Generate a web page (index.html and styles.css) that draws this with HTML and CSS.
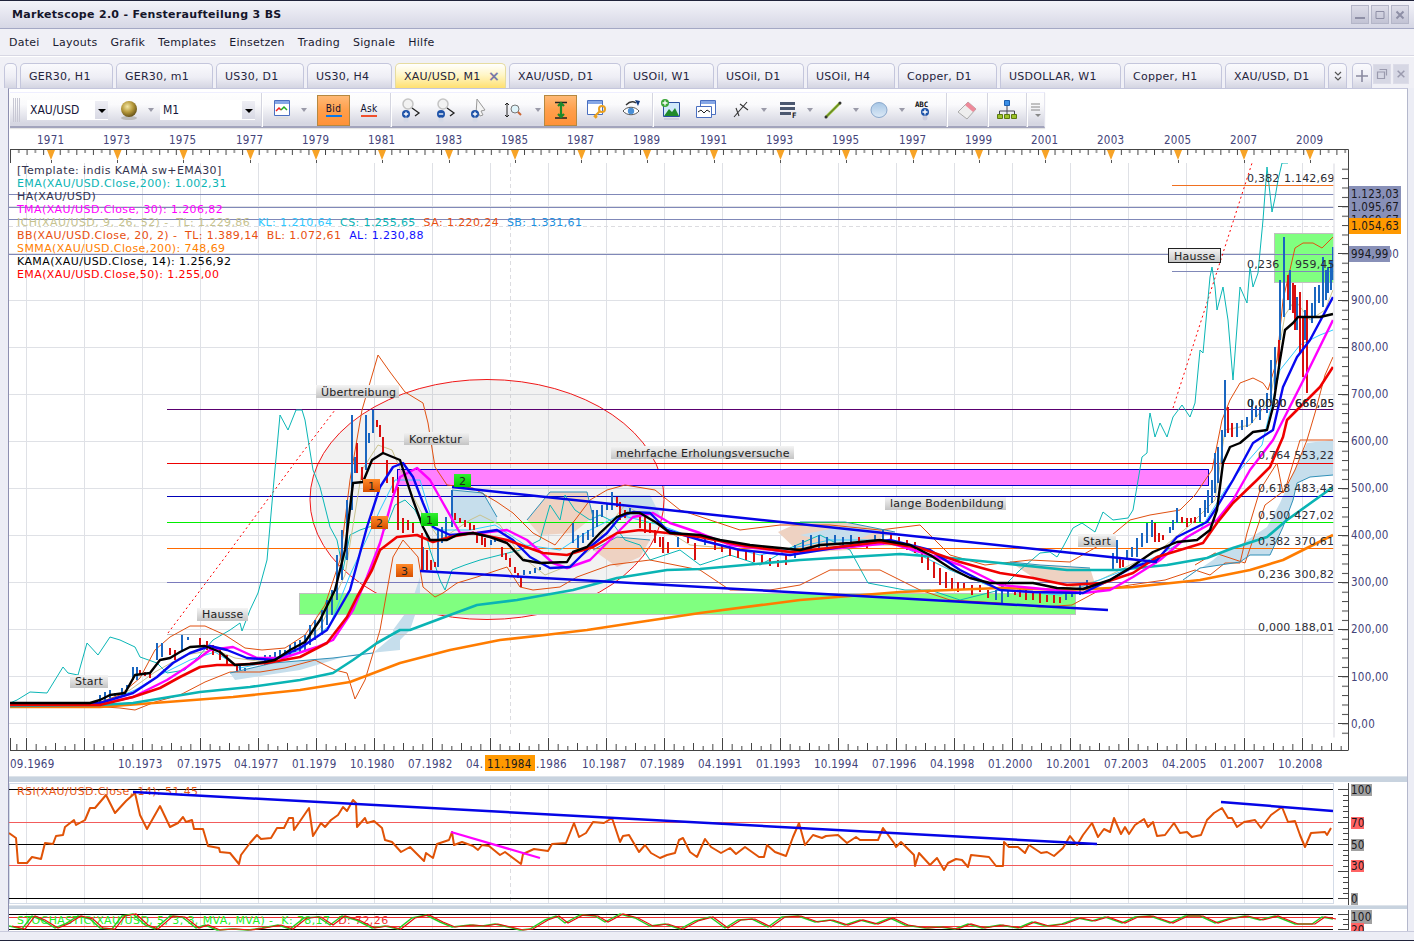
FILE: index.html
```html
<!DOCTYPE html>
<html lang="de">
<head>
<meta charset="utf-8">
<title>Marketscope 2.0 - Fensteraufteilung 3 BS</title>
<link rel="stylesheet" href="styles.css">
</head>
<body>
<div class="window">
  <header class="titlebar">
    <span class="title">Marketscope 2.0 - Fensteraufteilung 3 BS</span>
    <div class="winbtns">
      <span class="winbtn"><svg viewBox="0 0 12 12"><path d="M1 9h10" class="wi2"/></svg></span>
      <span class="winbtn"><svg viewBox="0 0 12 12"><path d="M2 2.500h8v7H2z" class="wi"/></svg></span>
      <span class="winbtn"><svg viewBox="0 0 12 12"><path d="M2.500 2.500l7 7M9.500 2.500l-7 7" class="wi2"/></svg></span>
    </div>
  </header>
  <nav class="menubar">
    <span>Datei</span><span>Layouts</span><span>Grafik</span><span>Templates</span><span>Einsetzen</span><span>Trading</span><span>Signale</span><span>Hilfe</span>
  </nav>
  <div class="tabbar">
    <div class="tab"></div>
    <div class="tab">GER30, H1</div>
    <div class="tab">GER30, m1</div>
    <div class="tab">US30, D1</div>
    <div class="tab">US30, H4</div>
    <div class="tab active">XAU/USD, M1<b class="tabx">×</b></div>
    <div class="tab">XAU/USD, D1</div>
    <div class="tab">USOil, W1</div>
    <div class="tab">USOil, D1</div>
    <div class="tab">USOil, H4</div>
    <div class="tab">Copper, D1</div>
    <div class="tab">USDOLLAR, W1</div>
    <div class="tab">Copper, H1</div>
    <div class="tab">XAU/USD, D1</div>
    <div class="tab chev"><svg viewBox="0 0 10 12" width="10" height="12"><path d="M2 2l3 3 3-3M2 7l3 3 3-3" fill="none" stroke="#555" stroke-width="1.2"/></svg></div>
    <div class="tab plus"><svg viewBox="0 0 12 12" width="12" height="12"><path d="M6 0v12M0 6h12" stroke="#8a8aa0" stroke-width="1.6"/></svg></div>
    <div class="mdibtn"><svg viewBox="0 0 12 12" width="12" height="12"><path d="M3.500 1.500h7v6M1.500 4h7v6.500h-7z" fill="none" stroke="#9a9aae" stroke-width="1.200"/></svg></div>
    <div class="mdibtn"><svg viewBox="0 0 12 12" width="10" height="10"><path d="M2 2l8 8M10 2l-8 8" stroke="#9a9aae" stroke-width="1.800"/></svg></div>
  </div>
  <main class="panel">
    <div class="toolwrap">
      <div class="toolbar">
        <div class="grip"></div>
        <div class="combo c1"><span>XAU/USD</span><i class="drop"></i></div>
        <div class="tool"><svg width="22" height="26" viewBox="0 0 22 26"><defs><radialGradient id="gold" cx=".4" cy=".35" r=".7"><stop offset="0" stop-color="#f3e6a4"/><stop offset=".5" stop-color="#b79a3c"/><stop offset="1" stop-color="#5e4a12"/></radialGradient></defs><ellipse cx="11" cy="21" rx="8" ry="2" fill="#bbb"/><circle cx="11" cy="12" r="8" fill="url(#gold)"/></svg></div>
        <div class="tool"><i class="arr"></i></div>
        <div></div>
        <div class="combo c2"><span>M1</span><i class="drop"></i></div>
        <div class="tool"><i class="sep"></i></div>
        <div class="tool"><svg width="22" height="26" viewBox="0 0 22 26"><path d="M3.500 3.500h15v15h-15z" fill="#fff" stroke="#4a6fc0"/><path d="M4 4h14v3H4z" fill="#86a7e6"/><path d="M5 14l3-3 2 2" fill="none" stroke="#e22" stroke-width="1.500"/><path d="M10 13l3-3 3 3" fill="none" stroke="#2a2" stroke-width="1.500"/><path d="M5 21h12" stroke="#ddd" stroke-width="2"/></svg></div>
        <div class="tool"><i class="arr"></i></div>
        <div></div>
        <div class="tool"><div class="btn on bid"><span>Bid</span><i class="bar blue"></i></div></div>
        <div class="tool"><div class="btn bid"><span>Ask</span><i class="bar red"></i></div></div>
        <div class="tool"><i class="sep"></i></div>
        <div class="tool"><svg width="24" height="26" viewBox="0 0 24 26"><circle cx="10" cy="7" r="5" fill="#f2f2f2" stroke="#c4c4c4" stroke-width="1.500"/><path d="M14 11l7 5-4 3" fill="none" stroke="#222" stroke-width="1.300"/><circle cx="8" cy="17" r="4" fill="#1d52a8"/><path d="M8 14.800v4.400M5.800 17h4.400" stroke="#fff" stroke-width="1.300"/><circle cx="8" cy="23" r="2.500" fill="#d4d8e4"/></svg></div>
        <div class="tool"><svg width="24" height="26" viewBox="0 0 24 26"><circle cx="10" cy="7" r="5" fill="#f2f2f2" stroke="#c4c4c4" stroke-width="1.500"/><path d="M14 11l7 5-4 3" fill="none" stroke="#222" stroke-width="1.300"/><circle cx="8" cy="17" r="4" fill="#1d52a8"/><path d="M5.800 17h4.400" stroke="#fff" stroke-width="1.300"/><circle cx="8" cy="23" r="2.500" fill="#d4d8e4"/></svg></div>
        <div class="tool"><svg width="24" height="26" viewBox="0 0 24 26"><path d="M10 2l8 11-4 1 2 4-3 1-2-4-2 2z" fill="#f4f4f4" stroke="#999"/><circle cx="8" cy="17" r="4" fill="#1d52a8"/><path d="M8 14.800v4.400M5.800 17h4.400" stroke="#fff" stroke-width="1.300"/><circle cx="8" cy="23" r="2.500" fill="#d4d8e4"/></svg></div>
        <div class="tool"><svg width="24" height="26" viewBox="0 0 24 26"><path d="M5 6v14M3 8l2-2 2 2M3 18l2 2 2-2" fill="none" stroke="#222"/><circle cx="13" cy="12" r="4" fill="#dff4fa" stroke="#777"/><path d="M16 15l3 3" stroke="#c63" stroke-width="2"/><path d="M4 22h14" stroke="#ddd"/></svg></div>
        <div class="tool"><i class="arr"></i></div>
        <div class="tool"><div class="btn on"><svg width="22" height="26" viewBox="0 0 22 26"><path d="M5 5.500h12M5 21h12" stroke="#222" stroke-width="1.300"/><path d="M11 6v14M8 9l3-3 3 3M8 17l3 3 3-3" fill="none" stroke="#1c8a2a" stroke-width="2.200"/></svg></div></div>
        <div class="tool"><svg width="24" height="26" viewBox="0 0 24 26"><path d="M3.500 3.500h15v14h-15z" fill="#fff" stroke="#4a6fc0"/><path d="M4 4h14v3H4z" fill="#86a7e6"/><circle cx="18" cy="12" r="3" fill="none" stroke="#e8a020" stroke-width="2"/><path d="M16 14l-6 6M11 21l2-2" stroke="#e8a020" stroke-width="2.200"/></svg></div>
        <div class="tool"><svg width="24" height="26" viewBox="0 0 24 26"><path d="M3 14c4-5 12-5 16 0-4 5-12 5-16 0z" fill="#fff" stroke="#555"/><circle cx="11" cy="14" r="3.200" fill="#4a8fd6"/><path d="M6 8c3-3 7-4 10-2" fill="none" stroke="#333" stroke-width="1.400"/><path d="M15 3l5 1-2 5z" fill="#123a80"/><path d="M6 22h10" stroke="#ddd" stroke-width="2"/></svg></div>
        <div class="tool"><i class="sep"></i></div>
        <div class="tool"><svg width="24" height="26" viewBox="0 0 24 26"><path d="M4.500 5.500h16v14h-16z" fill="#cfe8fa" stroke="#2a4fa0"/><path d="M5 19l5-7 3 3 3-4 4 8z" fill="#1f8a2a"/><circle cx="6" cy="6" r="4" fill="#3aa63a"/><path d="M6 3.500v5M3.500 6h5" stroke="#fff" stroke-width="1.300"/><path d="M5 22h15" stroke="#ccd" stroke-width="2"/></svg></div>
        <div class="tool"><svg width="24" height="26" viewBox="0 0 24 26"><path d="M6.500 3.500h15v14h-15z" fill="#fff" stroke="#4a6fc0"/><path d="M7 4h14v3H7z" fill="#86a7e6"/><path d="M2.500 9.500h15v11h-15z" fill="#fff" stroke="#4a6fc0"/><path d="M4 15l3-2 3 3 3-3 3 2" fill="none" stroke="#222"/></svg></div>
        <div class="tool"><svg width="24" height="26" viewBox="0 0 24 26"><path d="M5 20L18 5M7 11l3 8M11 7l8 6" fill="none" stroke="#333" stroke-width="1.100"/><path d="M6 23l3-1" stroke="#ddd" stroke-width="2"/></svg></div>
        <div class="tool"><i class="arr"></i></div>
        <div class="tool"><svg width="24" height="26" viewBox="0 0 24 26"><path d="M4 5h15v3H4zM4 10h15v3H4zM4 15h11v3H4z" fill="#4c5870"/><text x="16" y="21" class="icon-t">F</text></svg></div>
        <div class="tool"><i class="arr"></i></div>
        <div class="tool"><svg width="24" height="26" viewBox="0 0 24 26"><path d="M5 20L19 6" stroke="#84b020" stroke-width="2.500"/><path d="M5 20L19 6" stroke="#445" stroke-width=".5"/><circle cx="19" cy="6" r="1.500" fill="#333"/><circle cx="5" cy="20" r="1.500" fill="#333"/></svg></div>
        <div class="tool"><i class="arr"></i></div>
        <div class="tool"><svg width="24" height="26" viewBox="0 0 24 26"><defs><linearGradient id="oval" x1="0" y1="0" x2="0" y2="1"><stop offset="0" stop-color="#a7c7e6"/><stop offset="1" stop-color="#dce9f6"/></linearGradient></defs><ellipse cx="12" cy="13" rx="8" ry="7.500" fill="url(#oval)" stroke="#8aa8cc"/></svg></div>
        <div class="tool"><i class="arr"></i></div>
        <div class="tool"><svg width="24" height="26" viewBox="0 0 24 26"><text x="2" y="10" class="icon-t">ABC</text><circle cx="12" cy="15" r="4" fill="#1d52a8"/><path d="M12 12.500v5M9.500 15h5" stroke="#fff" stroke-width="1.400"/><circle cx="12" cy="21" r="2.500" fill="#ccd"/></svg></div>
        <div class="tool"><i class="sep"></i></div>
        <div class="tool"><svg width="24" height="26" viewBox="0 0 24 26"><path d="M3 15L13 5l8 7-9 10z" fill="#eee" stroke="#aaa"/><path d="M10 8l3-3 8 7-3 3z" fill="#ee8a9a"/></svg></div>
        <div class="tool"><i class="sep"></i></div>
        <div class="tool"><svg width="24" height="26" viewBox="0 0 24 26"><path d="M9.500 3.500h5v5h-5z" fill="#3a8ee6" stroke="#1c5fb0"/><path d="M12 9v5M4.500 17v-3h15v3M12 14v3" fill="none" stroke="#445"/><path d="M2.500 17.500h5v4h-5zM9.500 17.500h5v4h-5zM16.500 17.500h5v4h-5z" fill="#9bc22a" stroke="#5c7a10"/></svg></div>
        <div class="tool"><i class="sep"></i></div>
        <div class="tool"><svg width="12" height="16" viewBox="0 0 12 16"><path d="M1 2h9M1 5h9M1 8h9" stroke="#888"/><path d="M5 12h6l-3 3z" fill="#888"/></svg></div>
      </div>
    </div>

    <div class="charts">
      <svg class="chart" width="1398" height="32" viewBox="9 131 1398 32">
        <defs>
          <pattern id="tt" width="16.580" height="32" patternUnits="userSpaceOnUse" x="10" y="131"><path d="M.5 19v5M8.800 19v3" stroke="#444" stroke-width="1"/></pattern>
        </defs>
        <g class="ax">
          <text x="37" y="144">1971</text><text x="103" y="144">1973</text><text x="169" y="144">1975</text><text x="236" y="144">1977</text><text x="302" y="144">1979</text><text x="368" y="144">1981</text><text x="435" y="144">1983</text><text x="501" y="144">1985</text><text x="567" y="144">1987</text><text x="633" y="144">1989</text><text x="700" y="144">1991</text><text x="766" y="144">1993</text><text x="832" y="144">1995</text><text x="899" y="144">1997</text><text x="965" y="144">1999</text><text x="1031" y="144">2001</text><text x="1097" y="144">2003</text><text x="1164" y="144">2005</text><text x="1230" y="144">2007</text><text x="1296" y="144">2009</text>
        </g>
        <rect x="10" y="150" width="1338" height="6" fill="url(#tt)"/>
        <path d="M10 149.500H1348.500V163M10.500 149.500V163" fill="none" stroke="#444"/>
        <path fill="#f7a326" d="M47 150h8l-4 10zM113.500 150h8l-4 10zM179.500 150h8l-4 10zM246.500 150h8l-4 10zM312 150h8l-4 10zM378 150h8l-4 10zM445 150h8l-4 10zM511 150h8l-4 10zM577.500 150h8l-4 10zM643 150h8l-4 10zM710 150h8l-4 10zM776.500 150h8l-4 10zM842 150h8l-4 10zM909.500 150h8l-4 10zM975 150h8l-4 10zM1041.500 150h8l-4 10zM1107 150h8l-4 10zM1174 150h8l-4 10zM1240 150h8l-4 10zM1306 150h8l-4 10z"/>
        <path d="M51.500 160v3M117.500 160v3M183.500 160v3M250.500 160v3M316.500 160v3M382.500 160v3M449.500 160v3M515.500 160v3M581.500 160v3M647.500 160v3M714.500 160v3M780.500 160v3M846.500 160v3M913.500 160v3M979.500 160v3M1045.500 160v3M1111.500 160v3M1178.500 160v3M1244.500 160v3M1310.500 160v3" stroke="#555"/>
      </svg>

      <div class="mainchart">
        <svg class="chart" width="1398" height="588" viewBox="9 163 1398 588">
          <defs>
            <clipPath id="plot"><rect x="9" y="163" width="1324.500" height="574"/></clipPath>
            <linearGradient id="lab" x1="0" y1="0" x2="0" y2="1"><stop offset="0" stop-color="#f4f4f4"/><stop offset="1" stop-color="#c4c4c4"/></linearGradient>
            <linearGradient id="ora" x1="0" y1="0" x2="0" y2="1"><stop offset="0" stop-color="#ff8a2a"/><stop offset="1" stop-color="#d85000"/></linearGradient>
            <linearGradient id="grn" x1="0" y1="0" x2="0" y2="1"><stop offset="0" stop-color="#30f030"/><stop offset="1" stop-color="#00c800"/></linearGradient>
            <pattern id="bt" width="58" height="13" patternUnits="userSpaceOnUse" x="26" y="738"><path d="M.5 0v13M10.170 6v7M19.830 8v5M29.500 5v8M39.170 8v5M48.830 6v7" stroke="#444"/></pattern>
            <pattern id="rt" width="6" height="9.400" patternUnits="userSpaceOnUse" x="1342" y="187.500"><path d="M0 .5h6" stroke="#444"/></pattern>
          </defs>

          <g clip-path="url(#plot)">
            <path class="grid" d="M26.500 163v574M84.500 163v574M142.500 163v574M200.500 163v574M258.500 163v574M316.500 163v574M374.500 163v574M432.500 163v574M490.500 163v574M548.500 163v574M606.500 163v574M664.500 163v574M722.500 163v574M780.500 163v574M838.500 163v574M896.500 163v574M954.500 163v574M1012.500 163v574M1070.500 163v574M1128.500 163v574M1186.500 163v574M1244.500 163v574M1302.500 163v574M9 723.500h1325M9 676.500h1325M9 629.500h1325M9 582.500h1325M9 535.500h1325M9 488.500h1325M9 441.500h1325M9 394.500h1325M9 347.500h1325M9 300.500h1325M9 253.500h1325M9 206.500h1325"/>
            <path d="M9 226.500h1325M510.500 163v574" class="cross"/>

            <ellipse cx="487" cy="499.500" rx="177" ry="120" fill="#a8a8a8" fill-opacity=".15" stroke="#f01818"/>

            <path class="cloud-b" d="M230 673L273 663 333 658 373 653 400 630 400 650 350 655 300 670 235 680z"/>
            <path class="cloud-b" d="M393 630L410 607 420 577 420 600 410 630 395 645z"/>
            <path class="cloud-b" d="M452 490L467 492 483 493 497 517 497 523 453 523z"/>
            <path class="cloud-s" d="M527 520L550 492 587 492 593 517 573 533 540 535z"/>
            <path class="cloud-s" d="M593 550L617 537 650 540 640 557 617 567z"/>
            <path class="cloud-b" d="M612 495H650L660 515 625 520z"/>
            <path class="cloud-s" d="M778 532L800 522 845 522 895 532 850 550 800 553z"/>
            <path class="cloud-b" d="M800 535L850 525 880 530 845 545z"/>
            <path class="cloud-s" d="M1010 562L1040 565 1090 568 1097 590 1040 582z"/>
            <path class="cloud-b" d="M1183 580L1213 560 1227 548 1240 545 1267 527 1280 503 1293 473 1307 443 1333 440 1333 475 1310 477 1297 483 1293 500 1283 527 1270 555 1250 555 1240 562 1200 568z"/>

            <rect class="grect" x="299.500" y="593.500" width="776" height="21"/>
            <rect class="grect" x="1274.500" y="233.500" width="60" height="49"/>
            <rect x="397.500" y="469.500" width="811" height="16" fill="#ff80ff" stroke="#0000c8"/>

            <path d="M167 634.500H1334" stroke="#b8b8b8"/>
            <path d="M167 582.500H1334" stroke="#7a7abc"/>
            <path d="M167 548.500H1334" stroke="#ff6a00"/>
            <path d="M167 522.500H1334" stroke="#00ee00"/>
            <path d="M167 496.500H1334" stroke="#0000b8"/>
            <path d="M167 463.500H1334" stroke="#ee0000"/>
            <path d="M167 409.500H1334" stroke="#5a0070"/>
            <path d="M1172 271.500H1334" stroke="#8088b8"/>
            <path d="M1172 185.500H1334" stroke="#f07020"/>
            <path d="M9 194.500H1334M9 207.500H1334M9 219.500H1334M9 254.500H1334" stroke="#8088b8"/>

            <path class="dash" d="M168 633L223 560 302 453 335 410"/>
            <path class="dash" d="M1173 408L1253 160"/>

            <polyline class="t chik" points="10,703 17,700 30,692 47,693 63,667 68,673 78,675 87,643 98,655 110,637 120,640 135,647 140,657 157,663 167,673 185,670 200,655 213,640 230,630 240,623 242,631 250,610 258,593 267,560 274,480 280,415 288,430 296,410 302,410 305,420 313,470 320,487 330,527 337,540 343,570 350,535 360,530 375,525 385,530 395,505 405,500 415,510 425,530 430,550 440,580 445,590 452,570 465,565 480,560 500,555 520,550 540,540 550,505 560,520 565,495 575,510 590,520 600,515 610,520 625,540 640,545 650,560 680,550 700,565 730,555 760,565 790,548 820,535 850,550 868,583 905,590 930,590 960,600 1000,590 1020,570 1040,553 1050,552 1057,557 1063,547 1073,528 1082,523 1095,532 1103,512 1113,520 1128,518 1133,510 1142,457 1147,453 1149,420 1150,413 1155,437 1160,423 1167,437 1173,417 1182,405 1190,417 1195,403 1200,350 1203,353 1210,277 1212,267 1215,287 1217,310 1223,287 1228,320 1233,380 1240,287 1247,303 1250,267 1253,287 1258,273 1263,220 1267,167 1272,212 1275,198 1278,180 1282,163 1288,163"/>
            <polyline class="t tan" points="100,703 130,690 155,672 185,655 215,650 235,658 265,662 290,652 320,628 345,575 362,470 378,445 392,450 405,480 420,510 440,540 470,520 480,515 500,525 520,555 545,575 570,565 590,550 605,530 625,505 650,520 690,545 750,550 800,550 850,545 900,545 950,570 1000,590 1050,592 1100,580 1130,565 1160,550 1190,525 1215,500 1225,430 1250,425 1270,400 1285,315 1295,300 1310,320 1325,310 1333,290"/>
            <polyline class="t lc" points="100,704 135,690 160,675 190,660 215,652 240,668 270,662 300,650 330,625 350,575 380,510 395,480 420,480 435,530 470,530 495,525 525,545 560,550 590,530 620,515 660,525 700,540 760,555 830,540 890,540 950,570 1000,590 1060,595 1120,572 1160,555 1200,530 1225,490 1240,470 1262,445 1280,370 1300,345 1320,335 1333,330"/>
            <polyline class="t bb" points="10,704 95,704 120,695 140,678 155,650 170,637 190,626 205,626 225,635 245,648 262,650 285,648 305,635 325,605 340,560 350,480 362,410 378,355 390,372 405,392 423,403 428,423 435,467 447,485 473,488 497,502 513,513 533,533 555,545 575,520 590,500 607,490 625,485 655,490 680,510 710,520 740,530 780,525 830,525 880,530 920,525 950,555 985,565 1030,560 1070,562 1100,545 1130,520 1150,515 1180,510 1195,495 1212,470 1222,420 1230,400 1240,383 1253,378 1263,383 1268,390 1277,360 1283,300 1295,248 1303,243 1313,243 1322,248 1333,237"/>
            <polyline class="t bb" points="10,706 90,706 120,708 135,710 155,702 180,695 205,682 230,672 260,672 285,668 315,660 335,670 347,673 355,699 365,680 380,630 393,557 403,540 418,557 423,587 435,597 443,593 457,583 477,577 507,567 520,587 533,590 560,587 577,577 610,565 650,560 700,570 730,590 770,590 800,585 830,570 880,570 920,590 950,600 1000,603 1040,607 1072,605 1100,590 1130,585 1165,580 1195,570 1210,575 1225,563 1240,563 1247,533 1260,490 1277,463 1283,493 1295,470 1307,440 1315,413 1325,375 1333,357"/>
            <polyline class="t bb" points="1195,565 1215,553 1245,563 1265,505 1285,490 1300,440 1320,440 1333,440"/>

            <path class="cb" d="M100 695V704M105 692V700M110 690V698M115 693V696M122 688V695M127 685V690M133 667V680M137 667V680M157 643V660M162 643V657M182 635V650M188 637V640M240 665V670M245 668V671M265 655V665M270 655V662M275 652V660M280 650V658M285 650V655M290 645V655M295 642V652M300 640V652M305 635V650M310 625V645M315 620V640M322 610V635M327 600V625M332 590V615M337 555V600M342 530V580M347 500V560M352 415V510M355 457V473M366 415V470M369 433V443M373 410V433M423 547V570M438 530V567M442 527V543M446 517V537M452 490V527M491 540V545M495 538V542M524 570V575M530 571V574M535 568V573M540 567V570M573 523V543M578 535V548M583 533V543M588 530V540M593 510V537M597 510V527M602 505V517M607 503V510M612 492V510M630 508V514M678 537V547M705 535V545M795 545V558M803 540V552M811 535V550M819 535V548M827 537V547M835 535V545M843 537V547M851 535V545M875 535V545M883 530V545M996 590V600M1002 585V603M1008 590V597M1066 590V600M1072 588V597M1080 585V595M1087 580V590M1113 553V570M1117 540V563M1127 550V560M1132 547V557M1137 538V557M1142 533V547M1147 523V543M1152 520V537M1170 527V533M1173 520V530M1177 508V523M1200 508V522M1205 500V517M1208 490V513M1212 480V503M1215 453V493M1218 447V483M1222 430V463M1225 380V437M1237 423V437M1242 420V430M1247 417V427M1252 400V423M1256 407V417M1260 407V420M1267 393V413M1271 360V403M1275 347V390M1280 280V340M1284 237V317M1290 270V310M1297 297V330M1305 310V340M1312 303V323M1315 287V317M1319 285V303M1323 257V307M1326 270V300M1328 267V293M1331 260V290M1333 247V280"/>
            <path class="cr" d="M140 670V675M145 672V676M150 672V678M170 648V655M175 650V660M200 638V645M207 641V650M213 645V655M220 650V660M227 655V665M237 665V672M357 443V473M362 467V480M377 420V427M380 425V437M383 437V453M387 460V483M393 477V493M398 487V530M403 518V533M408 520V530M413 523V533M422 533V570M427 550V570M431 560V570M435 562V567M455 513V520M460 518V523M465 520V527M470 523V530M474 525V530M477 533V543M482 535V545M485 538V547M502 547V557M506 553V560M510 558V567M515 567V573M518 573V578M521 577V587M617 497V507M620 502V520M625 510V518M640 513V528M645 517V533M650 523V533M655 530V543M660 537V547M663 537V553M668 542V553M688 533V543M695 543V560M715 540V550M722 545V552M730 548V556M738 550V558M746 550V560M754 552V562M762 555V563M770 558V566M778 560V567M786 555V565M859 537V547M867 540V548M891 535V543M899 537V545M907 540V550M915 542V553M922 550V563M928 555V570M934 562V578M940 568V585M946 572V588M952 578V590M958 582V592M964 583V590M972 585V595M980 585V592M988 590V598M1015 590V595M1020 588V597M1026 590V600M1033 592V600M1040 593V603M1047 595V602M1054 595V603M1060 597V603M1120 558V568M1123 560V567M1155 523V542M1159 533V542M1163 535V540M1182 517V523M1187 518V527M1191 518V523M1195 517V523M1228 407V433M1232 423V437M1279 340V367M1288 275V300M1293 283V313M1295 285V330M1300 292V353M1303 317V377M1307 300V393"/>

            <path class="cloud-line" d="M230 673L273 663 333 658 373 653M452 490L483 493 497 517M527 520L550 492 587 492 593 517M593 550L617 537 650 540M1183 580L1200 568 1240 562 1250 555 1270 555 1283 527 1293 500 1297 483 1310 477 1333 475M800 522H845L895 532M1010 562L1040 565 1090 568"/>

            <polyline class="m orange" points="10,707 100,707 167,702 233,697 300,690 350,682 400,663 450,650 500,640 545,635 587,630 633,623 700,613 800,600 900,592 1000,588 1067,590 1133,587 1200,580 1250,570 1283,560 1333,535"/>
            <polyline class="m teal" points="10,706 100,705 133,703 200,692 250,687 300,680 333,673 353,660 377,643 400,630 410,630 450,615 477,605 517,600 573,590 617,578 667,570 700,569 800,560 900,554 950,558 1000,563 1067,570 1117,570 1167,565 1207,558 1233,548 1267,537 1287,520 1333,487"/>
            <polyline class="m mag" points="10,704 100,704 133,697 167,680 187,667 210,650 233,647 257,658 283,658 317,647 333,640 353,610 367,577 380,543 393,497 400,477 417,468 430,480 443,503 460,533 480,533 507,530 527,540 553,563 567,568 590,560 607,543 633,517 653,513 670,523 700,533 730,545 790,552 840,548 890,543 930,555 960,565 1000,585 1033,588 1083,593 1110,590 1133,577 1160,560 1187,537 1217,520 1233,500 1250,470 1273,440 1307,373 1333,320"/>
            <polyline class="m blu" points="10,704 100,703 133,693 157,677 173,663 190,653 210,646 227,650 247,658 273,660 300,648 327,630 350,590 367,527 380,487 393,467 403,463 413,477 423,503 433,527 450,535 477,533 497,530 513,540 530,557 550,568 570,567 590,547 607,533 620,517 633,512 650,513 667,530 700,540 740,550 790,555 840,547 890,540 930,550 960,570 1000,590 1033,592 1083,593 1110,580 1133,567 1157,560 1177,537 1207,522 1217,507 1233,480 1253,443 1273,430 1283,387 1297,357 1310,340 1333,297"/>
            <polyline class="m red" points="10,705 100,705 133,697 160,688 180,677 200,667 217,665 233,665 267,663 300,657 327,643 347,617 357,597 372,570 380,550 397,537 417,535 433,542 450,537 473,533 507,540 543,553 567,555 593,547 617,533 640,530 667,533 700,537 740,545 790,552 830,548 880,542 920,548 960,562 1000,573 1033,578 1067,585 1103,583 1133,573 1157,557 1180,550 1203,543 1217,523 1233,503 1257,480 1270,467 1283,437 1287,420 1320,387 1333,367"/>
            <polyline class="m blk" points="10,703 90,703 100,700 110,695 125,693 135,675 150,673 160,660 170,658 180,652 190,647 205,646 220,652 235,665 250,664 265,662 275,660 290,650 305,642 320,620 335,590 345,550 353,483 363,482 372,460 383,453 400,460 413,500 423,527 430,540 447,540 457,535 473,533 490,537 507,543 523,560 540,563 567,562 573,552 587,547 600,533 617,517 627,513 640,513 657,523 670,533 700,535 720,540 750,545 780,548 800,550 820,545 850,543 880,540 910,545 930,555 950,568 970,578 990,583 1033,583 1057,588 1083,589 1110,580 1130,568 1153,552 1177,542 1197,540 1210,530 1217,510 1223,463 1230,447 1240,443 1253,432 1267,430 1273,407 1280,360 1285,330 1293,323 1298,317 1320,317 1333,314"/>

            <path class="trend" d="M452 487L1157 562M420 571L1108 610"/>
          </g>

          <g class="anno">
            <rect x="316" y="385" width="83" height="13" fill="url(#lab)"/><text x="321" y="396">Übertreibung</text>
            <rect x="404" y="432" width="65" height="13" fill="url(#lab)"/><text x="409" y="443">Korrektur</text>
            <rect x="611" y="446" width="183" height="13" fill="url(#lab)"/><text x="616" y="457">mehrfache Erholungsversuche</text>
            <rect x="885" y="497" width="121" height="13" fill="url(#lab)"/><text x="890" y="507">lange Bodenbildung</text>
            <rect x="1078" y="534" width="38" height="13" fill="url(#lab)"/><text x="1083" y="545">Start</text>
            <rect x="197" y="608" width="51" height="13" fill="url(#lab)"/><text x="202" y="618">Hausse</text>
            <rect x="70" y="675" width="38" height="13" fill="url(#lab)"/><text x="75" y="685">Start</text>
            <rect x="1168.500" y="248.500" width="52" height="14" fill="url(#lab)" stroke="#222"/><text x="1174" y="260">Hausse</text>
          </g>
          <g class="badge">
            <rect x="363" y="479" width="17" height="13" fill="url(#ora)"/><text x="368" y="490">1</text>
            <rect x="371" y="516" width="17" height="13" fill="url(#ora)"/><text x="376" y="527">2</text>
            <rect x="396" y="564" width="17" height="13" fill="url(#ora)"/><text x="401" y="575">3</text>
            <rect x="421" y="513" width="17" height="13" fill="url(#grn)"/><text x="426" y="524">1</text>
            <rect x="454" y="474" width="17" height="13" fill="url(#grn)"/><text x="459" y="485">2</text>
          </g>
          <g class="fib">
            <text x="1247" y="182">0,382</text><text x="1284" y="182">1.142,69</text>
            <text x="1247" y="268">0,236</text><text x="1295" y="268">959,45</text>
            <text x="1247" y="407">0,0020</text><text x="1247" y="407">0,0000</text><text x="1295" y="407">668,05</text><text x="1295" y="407">666,25</text>
            <text x="1258" y="459">0,764 553,22</text>
            <text x="1258" y="492">0,618 483,43</text>
            <text x="1258" y="519">0,500 427,02</text>
            <text x="1258" y="545">0,382 370,61</text>
            <text x="1258" y="578">0,236 300,82</text>
            <text x="1258" y="631">0,000 188,01</text>
          </g>

          <rect x="1333.500" y="163.500" width="1" height="574" fill="#d8d8e0"/>
          <path d="M1348.500 163V750M1338 206.500h10M1338 253.500h10M1338 300.500h10M1338 347.500h10M1338 394.500h10M1338 441.500h10M1338 488.500h10M1338 535.500h10M1338 582.500h10M1338 629.500h10M1338 676.500h10M1338 723.500h10" stroke="#444" fill="none"/>
          <rect x="1342" y="168" width="6" height="569" fill="url(#rt)"/>
          <rect x="10" y="738" width="1338" height="13" fill="url(#bt)"/>
          <path d="M10 750.500H1348.500M10.500 738V751" stroke="#444" fill="none"/>

          <g class="ax">
            <text x="1351" y="304">900,00</text><text x="1351" y="351">800,00</text><text x="1351" y="398">700,00</text><text x="1351" y="445">600,00</text><text x="1351" y="492">500,00</text><text x="1351" y="539">400,00</text><text x="1351" y="586">300,00</text><text x="1351" y="633">200,00</text><text x="1351" y="681">100,00</text><text x="1351" y="728">0,00</text>
            <text x="1351" y="258">1.000,00</text>
          </g>
          <rect x="1349" y="186" width="52" height="33" fill="#8890b8"/>
          <rect x="1349" y="218" width="52" height="6" fill="#8890b8"/>
          <rect x="1349" y="246" width="41" height="16" fill="#8890b8"/>
          <g class="axd">
            <text x="1351" y="198">1.123,03</text><text x="1351" y="211">1.095,67</text><text x="1351" y="224">1.069,67</text>
          </g>
          <rect x="1349" y="218" width="52" height="16" fill="#ff9900"/>
          <g class="axd">
            <text x="1351" y="230">1.054,63</text><text x="1351" y="258">994,99</text>
          </g>
        </svg>
        <div class="legend">
          <div class="l-dark">[Template: indis KAMA sw+EMA30]</div>
          <div class="l-teal">EMA(XAU/USD.Close,200): 1.002,31</div>
          <div class="l-dark">HA(XAU/USD)</div>
          <div class="l-mag">TMA(XAU/USD.Close, 30): 1.206,82</div>
          <div class="l-tan">ICH(XAU/USD, 9, 26, 52) -&nbsp; TL: 1.229,86&nbsp; <span class="l-lc">KL: 1.210,64</span>&nbsp; <span class="l-teal">CS: 1.255,65</span>&nbsp; <span class="l-or">SA: 1.220,24</span>&nbsp; <span class="l-sb">SB: 1.331,61</span></div>
          <div class="l-or">BB(XAU/USD.Close, 20, 2) -&nbsp; TL: 1.389,14&nbsp; BL: 1.072,61&nbsp; <span class="l-blue">AL: 1.230,88</span></div>
          <div class="l-orange">SMMA(XAU/USD.Close,200): 748,69</div>
          <div class="l-black">KAMA(XAU/USD.Close, 14): 1.256,92</div>
          <div class="l-red">EMA(XAU/USD.Close,50): 1.255,00</div>
        </div>
      </div>

      <svg class="chart" width="1398" height="25" viewBox="9 751 1398 25">
        <rect x="485" y="755" width="50" height="16" fill="#ff9900"/>
        <g class="ax">
          <text x="10" y="768">09.1969</text><text x="118" y="768">10.1973</text><text x="177" y="768">07.1975</text><text x="234" y="768">04.1977</text><text x="292" y="768">01.1979</text><text x="350" y="768">10.1980</text><text x="408" y="768">07.1982</text><text x="466" y="768">04.</text><text x="536" y="768">.1986</text><text x="582" y="768">10.1987</text><text x="640" y="768">07.1989</text><text x="698" y="768">04.1991</text><text x="756" y="768">01.1993</text><text x="814" y="768">10.1994</text><text x="872" y="768">07.1996</text><text x="930" y="768">04.1998</text><text x="988" y="768">01.2000</text><text x="1046" y="768">10.2001</text><text x="1104" y="768">07.2003</text><text x="1162" y="768">04.2005</text><text x="1220" y="768">01.2007</text><text x="1278" y="768">10.2008</text>
        </g>
        <text x="487" y="768" class="axd">11.1984</text>
      </svg>
      <div class="split s1"></div>

      <svg class="chart" width="1398" height="123" viewBox="9 782 1398 123">
        <rect x="9.500" y="783.500" width="1324" height="120" fill="#fff" stroke="#d4dce8"/>
        <path class="grid" d="M26.500 785v118M84.500 785v118M142.500 785v118M200.500 785v118M258.500 785v118M316.500 785v118M374.500 785v118M432.500 785v118M490.500 785v118M548.500 785v118M606.500 785v118M664.500 785v118M722.500 785v118M780.500 785v118M838.500 785v118M896.500 785v118M954.500 785v118M1012.500 785v118M1070.500 785v118M1128.500 785v118M1186.500 785v118M1244.500 785v118M1302.500 785v118"/>
        <path d="M510.500 785v118" class="cross"/>
        <path d="M9 822.500H1333M9 865.500H1333" stroke="#f25c5c"/>
        <path d="M9 789.500H1333M9 844.500H1333M9 898.500H1333" stroke="#000"/>
        <text x="17" y="795" class="rsi-l">RSI(XAU/USD.Close, 14): 51,45</text>
        <polyline class="rsi" points="9,833 16,838 18,863 27,863 32,857 41,859 45,843 53,844 56,836 63,835 65,827 74,820 76,825 85,820 90,808 95,808 106,795 115,813 126,801 135,793 140,815 147,829 160,806 170,827 178,823 183,817 186,822 192,820 194,829 203,829 208,846 219,848 220,852 230,853 239,864 241,855 250,843 257,835 261,839 271,838 277,828 284,828 289,818 293,818 294,830 309,808 313,836 321,823 325,827 331,820 338,815 343,807 347,811 353,800 356,803 357,827 365,818 367,823 374,821 382,828 385,840 392,842 401,852 410,847 424,861 426,853 433,858 437,844 449,840 452,832 454,845 462,842 473,846 478,850 482,845 489,846 500,855 505,852 521,864 523,854 534,849 548,851 552,844 566,843 574,823 579,837 586,833 593,822 604,823 612,818 620,842 623,836 629,835 639,852 645,845 651,853 660,858 667,855 675,853 679,840 683,838 690,852 697,857 705,839 711,847 721,853 730,848 736,854 745,847 752,852 759,857 764,857 767,845 775,852 786,856 793,837 799,823 805,845 813,835 822,838 826,836 838,835 847,843 856,837 860,840 878,840 883,828 894,843 896,847 901,842 914,855 915,866 919,853 930,865 937,858 944,870 948,863 956,859 962,860 968,867 971,855 989,857 996,866 1003,866 1004,842 1009,847 1018,847 1025,853 1029,845 1041,853 1047,852 1054,856 1063,848 1070,836 1077,845 1083,835 1092,823 1098,837 1104,829 1110,832 1114,818 1121,834 1125,827 1129,834 1135,825 1144,819 1148,827 1153,822 1157,836 1165,835 1174,823 1180,833 1187,832 1192,837 1201,835 1207,820 1214,813 1222,808 1228,818 1232,818 1237,827 1244,822 1255,820 1261,828 1271,815 1282,807 1288,822 1295,821 1300,835 1305,847 1311,833 1325,832 1327,835 1331,828"/>
        <path class="trend" d="M133 792L1097 844M1221 802L1333 811"/>
        <path d="M451 832L540 858" stroke="#ff00ff" stroke-width="2.200" fill="none"/>
        <path d="M1348.500 783V905M1338 789.500h10M1338 822.500h10M1338 844.500h10M1338 871.500h10M1338 898.500h10" stroke="#444" fill="none"/>
        <path d="M1343 795.500h5M1343 800.500h5M1343 806.500h5M1343 811.500h5M1343 817.500h5M1343 828.500h5M1343 833.500h5M1343 839.500h5M1343 850.500h5M1343 855.500h5M1343 860.500h5M1343 866.500h5M1343 877.500h5M1343 882.500h5M1343 888.500h5M1343 893.500h5" stroke="#444"/>
        <rect x="1351" y="784" width="21" height="12" fill="#a0a0a0"/><rect x="1351" y="817" width="13" height="12" fill="#ff6464"/><rect x="1351" y="839" width="13" height="12" fill="#a0a0a0"/><rect x="1351" y="860" width="13" height="12" fill="#ff6464"/><rect x="1351" y="893" width="7" height="12" fill="#a0a0a0"/>
        <g class="axd"><text x="1351" y="794">100</text><text x="1351" y="827">70</text><text x="1351" y="849">50</text><text x="1351" y="870">30</text><text x="1351" y="903">0</text></g>
      </svg>
      <div class="split s2"></div>

      <svg class="chart" width="1398" height="22" viewBox="9 909 1398 22">
        <path class="grid" d="M26.500 912v18M84.500 912v18M142.500 912v18M200.500 912v18M258.500 912v18M316.500 912v18M374.500 912v18M432.500 912v18M490.500 912v18M548.500 912v18M606.500 912v18M664.500 912v18M722.500 912v18M780.500 912v18M838.500 912v18M896.500 912v18M954.500 912v18M1012.500 912v18M1070.500 912v18M1128.500 912v18M1186.500 912v18M1244.500 912v18M1302.500 912v18"/>
        <path d="M9 914.500H1333M9 929.500H1333" stroke="#000"/>
        <path d="M9 917.500H1333M9 926.500H1333" stroke="#f03030"/>
        <text x="17" y="924" class="st-g">STOCHASTIC(XAU/USD, 5, 3, 3, MVA, MVA) -&#160; K: 78,17&#160; <tspan class="st-r">D: 72,26</tspan></text>
        <defs><polyline id="stk" points="9,926 22,929 32,916 42,920 55,928 65,924 78,916 90,919 100,928 112,929 122,916 133,914 145,925 155,929 170,916 182,917 196,928 205,925 217,930 232,929 248,930 262,928 278,925 290,929 304,918 318,917 330,925 342,916 356,920 372,928 385,926 398,929 412,918 426,915 440,922 452,927 470,925 482,926 495,924 508,927 520,930 530,929 545,920 556,916 565,923 580,915 595,916 605,922 620,914 635,918 650,926 665,924 680,929 695,921 710,917 725,928 738,920 752,919 768,927 782,917 798,916 815,922 830,920 845,925 860,920 875,924 890,918 905,925 925,928 940,927 955,929 968,924 982,928 1000,925 1018,928 1032,922 1046,926 1062,924 1078,918 1092,921 1105,917 1122,923 1135,917 1150,916 1170,923 1185,916 1200,916 1215,923 1228,919 1245,916 1260,920 1275,916 1295,924 1312,924 1322,917 1333,919"/></defs>
        <use href="#stk" class="st1"/>
        <use href="#stk" class="st2" x="3"/>
        <path d="M1348.500 910V930M1338 914.500h10M1343 919.500h5M1343 924.500h5M1338 929.500h10" stroke="#444" fill="none"/>
        <rect x="1351" y="910" width="21" height="14" fill="#a0a0a0"/><rect x="1351" y="923" width="13" height="8" fill="#ff6464"/>
        <g class="axd"><text x="1351" y="934">20</text><text x="1351" y="921">100</text></g>
      </svg>
    </div>
  </main>
  <footer class="footer"></footer>
</div>
</body>
</html>
```
FILE: styles.css
```css
* { box-sizing: border-box; }
html, body { margin: 0; padding: 0; }
body { width: 1414px; height: 941px; overflow: hidden; background: #ecedf5; font-family: "DejaVu Sans", sans-serif; font-size: 11px; color: #222238; }
.window { width: 1414px; height: 941px; display: flex; flex-direction: column; overflow: hidden; }

.titlebar { height: 29px; flex: none; border-top: 1px solid #20233a; border-bottom: 1px solid #a4a8c4; background: linear-gradient(#f3f3f9, #d6d7e5); display: flex; align-items: center; justify-content: space-between; padding: 0 5px 0 12px; }
.title { font-weight: bold; color: #15152a; font-size: 11px; letter-spacing: .3px; }
.winbtns { display: flex; gap: 2px; }
.winbtn { width: 18px; height: 19px; background: linear-gradient(#dcdce8, #c2c3d4); border: 1px solid #b4b6c8; display: flex; align-items: center; justify-content: center; }
.winbtn svg { width: 12px; height: 12px; }
.wi, .wi2 { fill: none; stroke: #8e8fa6; }
.wi2 { stroke-width: 2; }

.menubar { height: 27px; flex: none; background: #f0f0f6; display: flex; align-items: center; padding: 0 0 0 9px; gap: 13px; color: #1a1a30; letter-spacing: .25px; font-size: 11px; border-bottom: 1px solid #d8d8e4; }

.tabbar { height: 32px; flex: none; background: #f0f0f6; border-top: 1px solid #fff; padding: 6px 0 0 4px; display: grid; grid-template-columns: 16px 96px 100px 91px 88px 114px 115px 93px 90px 91px 102px 124px 101px 103px 24px 21px 20px 18px; letter-spacing: .25px; }
.tab { height: 25px; margin-right: 3px; padding: 0 0 0 8px; border: 1px solid #c4c6dc; border-bottom: 0; border-radius: 5px 5px 0 0; background: linear-gradient(#fafafd 0, #eeeef5 55%, #d4d5e2 100%); display: flex; align-items: center; color: #24243c; overflow: hidden; white-space: nowrap; }
.tab.active { background: linear-gradient(#fff, #fff6c8 45%, #ffe070); padding-left: 8px; padding-right: 5px; justify-content: space-between; border-color: #e6dca0; }
.tabx { color: #7a7aa8; font-size: 14px; font-weight: bold; }
.tab.chev { margin-right: 5px; padding: 0; justify-content: center; }
.tab.plus { margin-right: 1px; padding: 0; justify-content: center; }
.mdibtn { height: 20px; margin: 1px 2px 0 0; background: #d6d7e4; border: 1px solid #dcdce8; display: flex; align-items: center; justify-content: center; }

.panel { flex: none; width: 1400px; margin-left: 8px; border-left: 1px solid #8d8fb0; border-right: 1px solid #b4b8cc; background: #fff; border-top: 1px solid #c4c6dc; }
.toolwrap { height: 42px; padding: 3px 0 0 1px; display: flex; align-items: flex-start; }
.toolbar { width: 1035px; height: 36px; display: grid; align-items: center; grid-template-columns: 17px 83px 38px 6px 6px 97px 8px 34px 10px 8px 33px 38px 4px 36px 33px 36px 34px 13px 33px 38px 34px 6px 32px 38px 32px 14px 34px 10px 36px 10px 36px 10px 36px 6px 36px 4px 36px 2px 18px; background: linear-gradient(#fefefe, #fafafc 35%, #d6d7e2 92%); border-bottom: 2px solid #a2a4bc; border-top: 1px solid #eef; border-right: 1px solid #e4e4ee; box-shadow: 0 1px 1px #e4e4e4; }
.grip { height: 24px; width: 7px; margin-left: 3px; background: repeating-linear-gradient(90deg, #c8c8d4 0 1px, transparent 1px 2px); }
.combo { height: 20px; background: #fff; display: flex; justify-content: space-between; align-items: center; padding-left: 3px; color: #15153a; font-family: "DejaVu Sans Condensed", "DejaVu Sans", sans-serif; font-size: 12px; }
.combo.c1 { width: 81px; }
.combo.c2 { width: 95px; }
.drop { width: 13px; height: 18px; background: linear-gradient(#eeeef4, #d8d9e4); position: relative; }
.drop::after { content: ""; position: absolute; left: 3px; top: 8px; border: 4px solid transparent; border-top: 4px solid #000; border-bottom: 0; }
.tool { display: flex; justify-content: center; align-items: center; height: 34px; }
.arr { width: 0; height: 0; border: 3px solid transparent; border-top: 4px solid #9a9aa8; border-bottom: 0; }
.sep { display: block; width: 1px; height: 34px; background: #d4d5e0; box-shadow: 1px 0 0 #fff; }
.btn { width: 33px; height: 31px; display: flex; flex-direction: column; align-items: center; justify-content: center; }
.btn.on { background: linear-gradient(#ffb976, #ff9e4a 50%, #ff9238); border: 1px solid #b68840; }
.bid { font-family: "DejaVu Sans Condensed", "DejaVu Sans", sans-serif; font-size: 10px; color: #101030; gap: 1px; letter-spacing: .4px; }
.bar { display: block; width: 16px; height: 2.5px; }
.bar.blue { background: #0a78e8; }
.bar.red { background: #f0502c; }
.icon-t { font-family: "DejaVu Sans Mono", monospace; font-size: 7.500px; font-weight: bold; fill: #111; letter-spacing: -.2px; }

.charts { width: 1398px; background: #fff; }
.chart { display: block; }
.mainchart { position: relative; height: 588px; }
.legend { position: absolute; left: 8px; top: 1px; line-height: 13px; font-size: 11px; letter-spacing: .4px; white-space: nowrap; }
.l-dark { color: #33334e; }
.l-teal { color: #0bb5b5; }
.l-mag { color: #ff00ff; }
.l-tan { color: #c6c28e; }
.l-lc { color: #30c8ff; }
.l-or { color: #e85010; }
.l-sb { color: #2090e0; }
.l-blue { color: #1010ff; }
.l-orange { color: #ff8000; }
.l-black { color: #000; }
.l-red { color: #f00; }

.grid { stroke: #dfe1e6; fill: none; }
.cross { stroke: #dcdce0; stroke-dasharray: 4 3; fill: none; }
.grect { fill: #80ff80; stroke: #c0c0c0; }
.dash { fill: none; stroke: #f00; stroke-dasharray: 2 3; }
.cloud-b { fill: #c6deec; }
.cloud-s { fill: #eed2c2; }
.cloud-line { fill: none; stroke: #3090b8; stroke-width: 1; }
polyline.t { fill: none; stroke-width: 1; }
.chik { stroke: #0ab6b6; }
.tan { stroke: #c9c28e; }
.lc { stroke: #33ccff; }
.bb { stroke: #e05010; }
.cb { stroke: #1a66c0; stroke-width: 2; fill: none; }
.cr { stroke: #d81010; stroke-width: 2; fill: none; }
polyline.m { fill: none; stroke-linejoin: round; }
.orange { stroke: #ff7c00; stroke-width: 2.600; }
.teal { stroke: #0ab4b4; stroke-width: 2.600; }
.mag { stroke: #ff00ff; stroke-width: 2.400; }
.blu { stroke: #0808f0; stroke-width: 2.400; }
.red { stroke: #f00000; stroke-width: 2.600; }
.blk { stroke: #000; stroke-width: 2.400; }
.trend { stroke: #0505e6; stroke-width: 2.500; fill: none; }

svg text { font-family: "DejaVu Sans", sans-serif; font-size: 11px; letter-spacing: .22px; }
.ax text, .axd, .axd text { font-family: "DejaVu Sans Condensed", "DejaVu Sans", sans-serif; font-size: 11.500px; letter-spacing: .25px; }
.ax text { fill: #44447a; }
.axd, .axd text { fill: #18181c; }
.anno text { fill: #222; }
.badge text { fill: #222; }
.fib text { fill: #2c2c34; }
.rsi-l { fill: #e85a18; letter-spacing: .4px; }
.rsi { fill: none; stroke: #e05206; stroke-width: 2; stroke-linejoin: round; }
.split { background: #c8d3df; border-top: 1px solid #dde3ea; }
.split.s1 { height: 6px; }
.split.s2 { height: 4px; }
.st-g { fill: #22ee22; letter-spacing: .4px; }
.st-r { fill: #f03030; }
.st1 { fill: none; stroke: #22d022; stroke-width: 1.400; }
.st2 { fill: none; stroke: #e81010; stroke-width: 1.200; }

.footer { flex: 1; background: #ecedf5; border-top: 1px solid #c8cadc; border-bottom: 1px solid #20233a; }
```
